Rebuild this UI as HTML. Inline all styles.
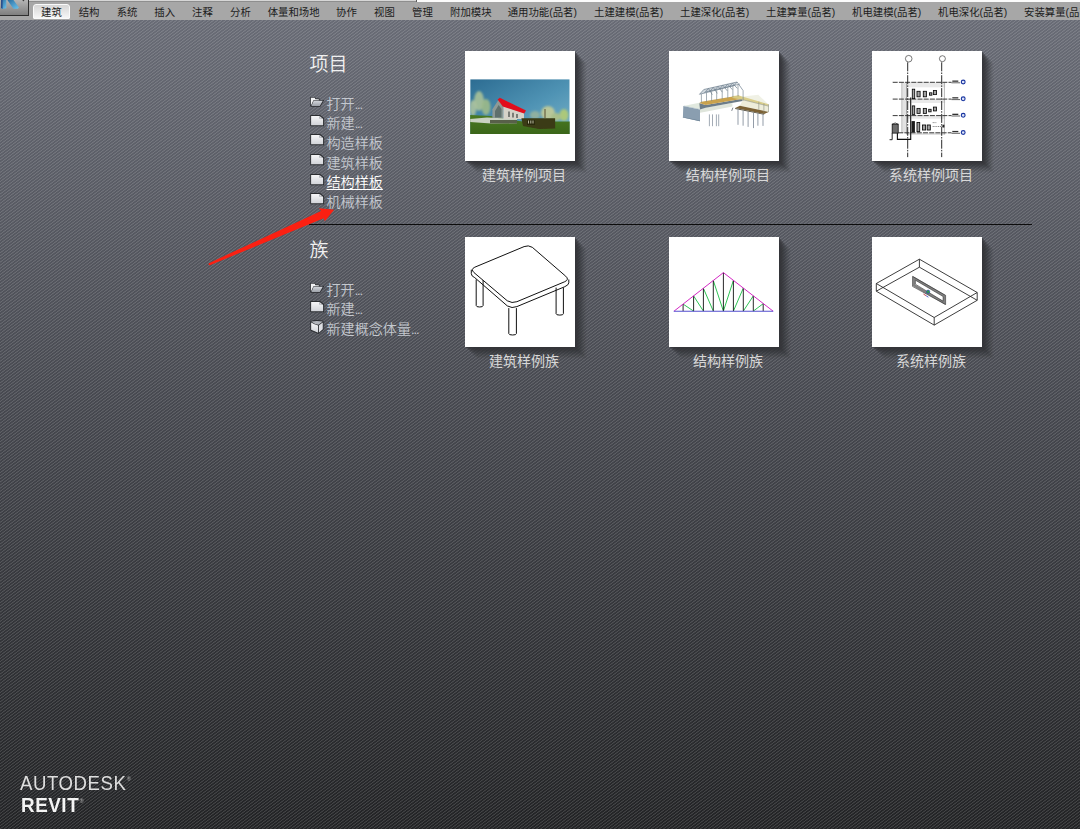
<!DOCTYPE html>
<html lang="zh-CN">
<head>
<meta charset="utf-8">
<title>Autodesk Revit</title>
<style>
html,body{margin:0;padding:0;}
body{width:1080px;height:829px;overflow:hidden;position:relative;
  font-family:"Liberation Sans","Noto Sans CJK SC",sans-serif;
  background:#4a4c52;}
#bg{position:absolute;left:0;top:0;width:1080px;height:829px;
  background:linear-gradient(to bottom,#686b75 20px,#45474e 415px,#222325 829px);}
#stripes{position:absolute;left:0;top:0;width:1080px;height:829px;
  background:repeating-linear-gradient(142.9deg,rgba(255,255,255,0) 0px,rgba(255,255,255,0) 1.0px,rgba(255,255,255,.15) 1.5px,rgba(255,255,255,.15) 1.9px,rgba(255,255,255,0) 2.4px,rgba(255,255,255,0) 2.47px);}
/* ribbon */
#ribbon{position:absolute;left:0;top:0;width:1080px;height:20px;background:#a7a7a7;}
#ribbon .topL{position:absolute;left:29px;width:387px;top:0;height:2px;background:linear-gradient(to bottom,#d6d6d6 0,#d6d6d6 1.2px,#8e8e8e 1.3px,#8e8e8e 2px);}
#ribbon .topD{position:absolute;left:416px;width:1px;top:0;height:2px;background:#5a5a5a;}
#ribbon .topR{position:absolute;left:417px;right:0;top:0;height:2px;background:linear-gradient(to bottom,#fbfbfb 0,#fbfbfb 1.5px,#c4c4c4 2px);}
#appbtn{position:absolute;left:0;top:0px;width:28px;height:15px;
  background:linear-gradient(to bottom,#b4b4b4,#7f7f7f);
  border-right:1px solid #2e2e2e;border-bottom:1px solid #2e2e2e;overflow:hidden;}
#appbtn svg{position:absolute;left:0;top:0;}
.tab{position:absolute;top:4.8px;height:16px;line-height:16px;font-size:10.4px;color:#1c1c1c;white-space:nowrap;}
.tab.on{top:4px;height:15px;left:33px;width:37px;box-sizing:border-box;border:1px solid #fafafa;border-radius:3px 3px 1px 1px;
  background:linear-gradient(to bottom,#d6d6d6,#f6f6f6);}
.tab.on span{position:absolute;left:7px;top:-0.2px;line-height:15px;}
/* start page */
.h{position:absolute;left:309.5px;font-size:19px;color:#f0f0f0;line-height:22px;white-space:nowrap;font-weight:350;}
.it{position:absolute;left:326.5px;font-size:14.1px;color:#c4c8cf;line-height:18px;white-space:nowrap;font-weight:350;}
.it.sel{color:#ffffff;text-decoration:underline;text-underline-offset:2px;}
.ic{position:absolute;left:310px;width:15px;height:12px;overflow:visible;}
.dots{letter-spacing:-1.2px;font-size:13px;}
#divider{position:absolute;left:309px;top:224px;width:723px;height:1px;background:#0c0c0c;}
.th{position:absolute;width:110px;height:110px;background:#fff;
  box-shadow:1px 1px 0 rgba(50,51,55,0.500),2px 2px 0 rgba(50,51,55,0.375),3px 3px 0 rgba(50,51,55,0.333),4px 4px 0 rgba(50,51,55,0.273),5px 5px 0 rgba(50,51,55,0.233),6px 6px 0 rgba(50,51,55,0.189),7px 7px 0 rgba(50,51,55,0.159),8px 8px 0 rgba(50,51,55,0.137),9px 9px 0 rgba(50,51,55,0.110),10px 10px 0 rgba(50,51,55,0.089),11px 11px 0 rgba(50,51,55,0.062),12px 12px 0 rgba(50,51,55,0.040);}
.th svg{position:absolute;left:0;top:0;}
.lb{position:absolute;width:160px;text-align:center;font-size:14.05px;color:#d8d8d8;line-height:18px;white-space:nowrap;font-weight:400;}
#arrow{position:absolute;left:0;top:0;}
#logo1{position:absolute;left:20px;top:771.7px;font-size:20px;line-height:22px;color:#dedede;letter-spacing:0.6px;white-space:nowrap;transform:scaleX(0.93);transform-origin:0 0;}
#logo2{position:absolute;left:20.8px;top:793.5px;font-size:20px;line-height:22px;color:#f4f4f4;font-weight:bold;letter-spacing:0.6px;white-space:nowrap;transform:scaleX(0.94);transform-origin:0 0;}
.reg{font-size:5.5px;vertical-align:top;position:relative;top:-4px;left:0.5px;letter-spacing:0;font-weight:normal;color:#bdbdbd;}
</style>
</head>
<body>
<div id="bg"></div>
<div id="stripes"></div>

<!-- ribbon -->
<div id="ribbon">
  <div class="topL"></div><div class="topD"></div><div class="topR"></div>
  <div id="appbtn">
    <svg width="28" height="15" viewBox="0 0 28 15">
      <defs>
        <linearGradient id="rb" x1="0" y1="0" x2="1" y2="1">
          <stop offset="0" stop-color="#2a6da0"/><stop offset="1" stop-color="#6cc4ee"/>
        </linearGradient>
      </defs>
      <path d="M1 0 L6.3 0 L6.3 8.2 L2.2 9 L1 8 Z" fill="url(#rb)"/>
      <path d="M1 0 L2.6 0 L2.6 8.8 L1 8 Z" fill="#2a4f8c"/>
      <path d="M7.4 0 L13.5 0 L18.9 7.6 L17.8 8.8 L13.4 8.8 Z" fill="url(#rb)"/>
      <path d="M22.3 0 L24.5 0 L23.4 1.6 Z" fill="#3a3a3a"/>
    </svg>
  </div>
  <div class="tab on"><span>建筑</span></div>
  <div class="tab" style="left:78.7px">结构</div>
  <div class="tab" style="left:116.7px">系统</div>
  <div class="tab" style="left:154.3px">插入</div>
  <div class="tab" style="left:192px">注释</div>
  <div class="tab" style="left:230px">分析</div>
  <div class="tab" style="left:267.7px">体量和场地</div>
  <div class="tab" style="left:336px">协作</div>
  <div class="tab" style="left:374px">视图</div>
  <div class="tab" style="left:412px">管理</div>
  <div class="tab" style="left:450px">附加模块</div>
  <div class="tab" style="left:507.7px">通用功能(品茗)</div>
  <div class="tab" style="left:594px">土建建模(品茗)</div>
  <div class="tab" style="left:680px">土建深化(品茗)</div>
  <div class="tab" style="left:766px">土建算量(品茗)</div>
  <div class="tab" style="left:852px">机电建模(品茗)</div>
  <div class="tab" style="left:938px">机电深化(品茗)</div>
  <div class="tab" style="left:1024px">安装算量(品茗)</div>
</div>


<svg width="0" height="0" style="position:absolute">
  <defs>
    <linearGradient id="gFile" x1="0" y1="0" x2="0" y2="1">
      <stop offset="0" stop-color="#f6f6f8"/><stop offset="1" stop-color="#d2d4d9"/>
    </linearGradient>
    <linearGradient id="gFlap" x1="0" y1="0" x2="0" y2="1">
      <stop offset="0" stop-color="#d2d5db"/><stop offset="1" stop-color="#9ea2aa"/>
    </linearGradient>
    <symbol id="icFile" viewBox="0 0 15 12">
      <path d="M0.3 0.1 H10.2 L14.1 3.3 V11.3 H0.3 Z" fill="#2b2d31"/>
      <path d="M1.1 0.9 H9.5 L13.1 3.9 V10.2 H1.1 Z" fill="url(#gFile)"/>
      <path d="M9.3 0.9 L13.1 4.1 H10.3 Q9.3 4.1 9.3 3.1 Z" fill="#9da0a7"/>
      <path d="M10 2.1 L12 3.6 H10.8 Q10 3.6 10 2.9 Z" fill="#f4f4f6"/>
    </symbol>
    <symbol id="icFolder" viewBox="0 0 15 11">
      <path d="M0.2 0.2 H5.2 L5.9 1.6 H9.6 V3 H14.2 L10.4 10.2 H0.9 L0.2 9 Z" fill="#2b2d31"/>
      <path d="M0.9 0.9 H4.7 L5.4 2.3 H8.8 V3.4 H3.4 L1.2 8.3 L0.9 8 Z" fill="#f2f3f5"/>
      <path d="M3.7 4 H12.8 L9.8 9.3 H1.4 Z" fill="url(#gFlap)"/>
    </symbol>
    <symbol id="icCube" viewBox="0 0 15 14">
      <path d="M0.3 1 Q7 -0.9 14 1 V9.7 L9 13.9 L0.3 10.5 Z" fill="#2b2d31"/>
      <path d="M1.2 1.6 Q7 0.2 13.2 1.6 L8.8 4.8 Q4 4.1 1.2 1.6 Z" fill="#b2b5bc"/>
      <path d="M1.2 2.5 Q4.5 4.7 8.4 5.5 V12.7 L1.2 9.8 Z" fill="url(#gFile)"/>
      <path d="M9.3 5.3 L13.2 2.4 V9.2 L9.3 12.6 Z" fill="#dddee3"/>
    </symbol>
  </defs>
</svg>

<!-- projects -->
<div class="h" style="top:54px">项目</div>
<div class="it" style="top:94.5px">打开<span class="dots">...</span></div>
<div class="it" style="top:114.2px">新建<span class="dots">...</span></div>
<div class="it" style="top:133.9px">构造样板</div>
<div class="it" style="top:153.6px">建筑样板</div>
<div class="it sel" style="top:173.3px">结构样板</div>
<div class="it" style="top:193.0px">机械样板</div>


<svg class="ic" style="top:96.8px;height:10.6px" viewBox="0 0 15 11" preserveAspectRatio="none"><use href="#icFolder"/></svg>
<svg class="ic" style="top:114.6px" viewBox="0 0 15 12" preserveAspectRatio="none"><use href="#icFile"/></svg>
<svg class="ic" style="top:134.3px" viewBox="0 0 15 12" preserveAspectRatio="none"><use href="#icFile"/></svg>
<svg class="ic" style="top:154.0px" viewBox="0 0 15 12" preserveAspectRatio="none"><use href="#icFile"/></svg>
<svg class="ic" style="top:173.7px" viewBox="0 0 15 12" preserveAspectRatio="none"><use href="#icFile"/></svg>
<svg class="ic" style="top:193.4px" viewBox="0 0 15 12" preserveAspectRatio="none"><use href="#icFile"/></svg>
<svg class="ic" style="top:282.8px;height:10.6px" viewBox="0 0 15 11" preserveAspectRatio="none"><use href="#icFolder"/></svg>
<svg class="ic" style="top:300.7px" viewBox="0 0 15 12" preserveAspectRatio="none"><use href="#icFile"/></svg>
<svg class="ic" style="top:320px;height:14px;width:14.5px" viewBox="0 0 15 14" preserveAspectRatio="none"><use href="#icCube"/></svg>

<div id="divider"></div>

<!-- families -->
<div class="h" style="top:240px">族</div>
<div class="it" style="top:280.5px">打开<span class="dots">...</span></div>
<div class="it" style="top:300.2px">新建<span class="dots">...</span></div>
<div class="it" style="top:319.9px">新建概念体量<span class="dots">...</span></div>

<!-- thumbnails -->
<div class="th" id="t1" style="left:465px;top:51px"><svg width="110" height="110" viewBox="0 0 110 110">
  <defs>
    <linearGradient id="sky" x1="0" y1="0" x2="1" y2="1">
      <stop offset="0" stop-color="#2c6c92"/><stop offset="0.55" stop-color="#4f93b4"/><stop offset="1" stop-color="#79b3c9"/>
    </linearGradient>
    <linearGradient id="grass" x1="0" y1="0" x2="0" y2="1">
      <stop offset="0" stop-color="#4a7a22"/><stop offset="1" stop-color="#3a6519"/>
    </linearGradient>
    <filter id="b1" x="-20%" y="-20%" width="140%" height="140%"><feGaussianBlur stdDeviation="0.9"/></filter>
    <filter id="b05" x="-20%" y="-20%" width="140%" height="140%"><feGaussianBlur stdDeviation="0.35"/></filter>
    <clipPath id="c1"><rect x="5.2" y="28.2" width="99.5" height="54.9"/></clipPath>
  </defs>
  <g clip-path="url(#c1)">
    <rect x="5.2" y="28.2" width="99.5" height="55" fill="url(#sky)"/>
    <g filter="url(#b1)">
      <ellipse cx="14" cy="50" rx="5" ry="10" fill="#a9c198" opacity="0.9"/>
      <ellipse cx="21" cy="56" rx="4.5" ry="8" fill="#9dba8a" opacity="0.9"/>
      <ellipse cx="8" cy="57" rx="3.5" ry="8" fill="#b0c6a0" opacity="0.85"/>
      <ellipse cx="83" cy="62" rx="7" ry="7" fill="#b9c79a"/>
      <ellipse cx="99" cy="64" rx="4.5" ry="6" fill="#b4cc74" opacity="0.9"/>
      <ellipse cx="91" cy="66" rx="5" ry="4" fill="#a9bf8a"/>
      <ellipse cx="70" cy="64" rx="5" ry="4" fill="#8fb0a0"/>
    </g>
    <path d="M5 64 L26 65 L40 68 L58 70.5 L105 70.5 V84 H5 Z" fill="url(#grass)"/>
    <g filter="url(#b05)">
      <path d="M5 68 L22 66.5 L52 68 L52 72.3 L26 72.6 L5 71 Z" fill="#c9d2c2"/>
      <path d="M25 69 H52 V72.4 H25 Z" fill="#59604a"/>
      <path d="M27.4 58.3 L33.7 48.6 L38.4 55.2 V67 H27.4 Z" fill="#8e9a96"/>
      <path d="M30 60 L33.7 54 L36.5 58 V66.5 H30 Z" fill="#5f706c"/>
      <path d="M38.4 55 L59 62 V68 H38.4 Z" fill="#d6d2c8"/>
      <path d="M44 60.5 V66 M48 61.8 V66.4 M52 63 V67" stroke="#4a4e4c" stroke-width="1.3"/>
      <path d="M32.6 48.6 L34.8 46.8 L61 59.6 L59.2 62.4 L37.8 55.4 Z" fill="#e2101e"/>
      <path d="M56.4 67.2 H90.1 V77.6 L74 78 L58 75 Z" fill="#3b3a14"/>
      <path d="M62 69 H70 V74 H62 Z" fill="#2a2a10"/>
      <path d="M63.5 69.5 V72.5 M65.8 69.5 V72.5 M68 69.5 V72.5" stroke="#c8c8b0" stroke-width="0.9"/>
      <path d="M80 58 V67" stroke="#5a5030" stroke-width="1"/>
    </g>
  </g>
</svg></div>
<div class="th" id="t2" style="left:669px;top:51px"><svg width="110" height="110" viewBox="0 0 110 110"><g filter="url(#b05)"><polygon points="14.3,55.1 30.3,51.8 36.6,53.9 31.0,58.4" fill="#e1e9df"/>
<polygon points="74.1,45.6 89.3,43.7 99.5,53.6 74.1,47.9" fill="#eef0e2" opacity="0.9"/>
<polygon points="14.3,55.1 31.0,58.5 31.0,70.3 13.9,66.6" fill="#8a9eb0"/>
<polygon points="14.3,55.1 15.3,54.7 31.9,58.2 31.0,58.5" fill="#b4c3ce"/>
<polygon points="13.9,65.9 31.0,69.6 31.0,70.3 13.9,66.6" fill="#6f8496"/>
<polygon points="31.0,58.3 36.6,56.5 63.4,52.1 63.4,55.5 36.6,60.7 31.0,61.8" fill="#dfe5db"/>
<polygon points="30.3,52.3 36.6,54.0 73.6,47.8 73.6,49.9 36.6,56.8 31.0,58.6" fill="#6d7d89"/>
<polygon points="30.3,52.1 32.4,50.7 69.9,44.6 73.6,47.7 36.6,54.0" fill="#c9a24e"/>
<polygon points="63.4,44.9 69.9,44.6 99.5,53.3 99.5,55.1 74.1,48.8 63.4,47.0" fill="#d9cc86" opacity="0.95"/>
<polygon points="74.1,48.8 99.5,55.1 99.5,60.9 70.8,54.8" fill="#ecebd6" opacity="0.9"/>
<polygon points="66.2,57.1 70.8,54.8 99.7,60.9 95.1,63.0" fill="#7c6236"/>
<polygon points="66.2,57.1 95.1,63.0 95.1,63.8 66.2,57.9" fill="#55503f"/>
<polygon points="30.5,43.3 34.8,38.5 68.1,31.0 65.3,34.5" fill="#a3b2bd" opacity="0.5"/>
<path d="M34.8 38.5 L68.1 31.0 M30.5 43.3 L65.3 34.5 M30.5 43.3 L34.8 38.5 M65.3 34.5 L68.1 31.0 M68.1 31.0 L74.1 39.6 M36.6 40.9 L70.8 33.1 M35.4 42.0 L39.5 37.5 M39.5 37.5 L43.3 43.7 M40.4 40.8 L44.3 36.4 M44.3 36.4 L48.3 42.4 M45.4 39.5 L49.1 35.3 M49.1 35.3 L53.3 41.2 M50.4 38.2 L53.9 34.2 M53.9 34.2 L58.3 39.9 M55.4 37.0 L58.7 33.2 M58.7 33.2 L63.3 38.6 M60.4 35.7 L63.5 32.1 M63.5 32.1 L68.3 37.4" stroke="#6e808e" stroke-width="0.7" fill="none"/>
<path d="M32.4 43.1 L32.4 51.4 M37.5 41.8 L37.5 50.7 M42.6 40.5 L42.6 49.8 M47.7 39.2 L47.7 49.0 M53.2 37.7 L53.2 48.1 M58.8 36.3 L58.8 47.1 M63.9 34.9 L63.9 46.3 M69.0 34.0 L69.0 45.3 M74.1 39.6 L74.1 49.6" stroke="#74828d" stroke-width="0.65" fill="none"/>
<path d="M89.8 50.7 L89.8 58.8 M94.9 52.5 L94.9 61.8 M99.5 53.3 L99.5 61.0 M74.1 48.8 L99.5 55.1" stroke="#8c8f7c" stroke-width="0.6" fill="none"/>
<path d="M40.4 63.4 L40.4 75.2 M43.5 63.4 L43.5 75.2 M47.4 63.4 L47.4 75.2 M49.7 63.4 L49.7 75.2" stroke="#929ca8" stroke-width="0.85" fill="none"/>
<path d="M69.0 58.3 L69.0 73.8 M74.1 59.5 L74.1 74.7 M79.1 60.7 L79.1 75.9 M84.5 61.8 L84.5 77.1 M88.9 62.2 L88.9 74.7 M94.0 62.9 L94.0 74.9" stroke="#8d97a3" stroke-width="0.95" fill="none"/>
<path d="M63.9 56.7 L62.7 59.9" stroke="#707880" stroke-width="0.9" fill="none"/></g></svg></div>
<div class="th" id="t3" style="left:872px;top:51px"><svg width="110" height="110" viewBox="0 0 110 110"><g filter="url(#b05)"><rect x="29.8" y="31.3" width="5.0" height="50.8" fill="#e3e3e3" />
<rect x="34.8" y="31.3" width="38.4" height="5.0" fill="#e9e9e9" />
<rect x="34.8" y="48.1" width="38.4" height="3.9" fill="#e9e9e9" />
<rect x="34.8" y="64.6" width="38.4" height="3.1" fill="#e9e9e9" />
<rect x="34.8" y="81.8" width="38.4" height="2.2" fill="#e0e0e0" />
<path d="M29.8 31.3 L29.8 82.1" stroke="#9a9a9a" stroke-width="0.6" fill="none" />
<path d="M34.5 31.3 L34.5 83.4" stroke="#8a8a8a" stroke-width="0.7" fill="none" />
<path d="M72.4 31.3 L72.4 83.4" stroke="#9a9a9a" stroke-width="0.7" fill="none" />
<path d="M20.7 31.3 L79.5 31.3" stroke="#3a3a3a" stroke-width="1" fill="none" stroke-dasharray="5 1.2"/>
<path d="M79.5 31.8 L88.1 31.8" stroke="#222" stroke-width="0.7" fill="none" />
<circle cx="91.2" cy="31.0" r="1.9" fill="#dfe6fa" stroke="#17339f" stroke-width="1.1"/>
<rect x="80.3" y="29.5" width="6.0" height="1.3" fill="#333" />
<path d="M20.7 48.1 L79.5 48.1" stroke="#3a3a3a" stroke-width="1" fill="none" stroke-dasharray="5 1.2"/>
<path d="M79.5 48.6 L88.1 48.6" stroke="#222" stroke-width="0.7" fill="none" />
<circle cx="91.2" cy="47.8" r="1.9" fill="#dfe6fa" stroke="#17339f" stroke-width="1.1"/>
<rect x="80.3" y="46.2" width="6.0" height="1.3" fill="#333" />
<path d="M20.7 64.6 L79.5 64.6" stroke="#3a3a3a" stroke-width="1" fill="none" stroke-dasharray="5 1.2"/>
<path d="M79.5 65.0 L88.1 65.0" stroke="#222" stroke-width="0.7" fill="none" />
<circle cx="91.2" cy="64.3" r="1.9" fill="#dfe6fa" stroke="#17339f" stroke-width="1.1"/>
<rect x="80.3" y="62.7" width="6.0" height="1.3" fill="#333" />
<path d="M26.2 81.8 L79.5 81.8" stroke="#3a3a3a" stroke-width="1" fill="none" stroke-dasharray="5 1.2"/>
<path d="M79.5 82.3 L88.1 82.3" stroke="#222" stroke-width="0.7" fill="none" />
<circle cx="91.2" cy="81.5" r="1.9" fill="#dfe6fa" stroke="#17339f" stroke-width="1.1"/>
<rect x="80.3" y="79.9" width="6.0" height="1.3" fill="#333" />
<path d="M35.7 11.3 L35.7 106.1" stroke="#2a2a2a" stroke-width="1" fill="none" stroke-dasharray="9 1.2 1.5 1.2"/>
<path d="M69.7 11.3 L69.7 106.1" stroke="#2a2a2a" stroke-width="1" fill="none" stroke-dasharray="9 1.2 1.5 1.2"/>
<circle cx="36.7" cy="7.7" r="3.3" fill="#fff" stroke="#222" stroke-width="0.6"/>
<circle cx="70.4" cy="7.7" r="3.0" fill="#fff" stroke="#222" stroke-width="0.6"/>
<rect x="40.3" y="38.2" width="2.4" height="9.4" fill="#a2a2a2" stroke="#0a0a0a" stroke-width="0.85"/>
<rect x="45.0" y="40.3" width="3.1" height="5.5" fill="#a2a2a2" stroke="#0a0a0a" stroke-width="0.85"/>
<rect x="51.3" y="40.3" width="3.1" height="5.5" fill="#a2a2a2" stroke="#0a0a0a" stroke-width="0.85"/>
<rect x="57.5" y="41.8" width="2.4" height="2.4" fill="#a2a2a2" stroke="#0a0a0a" stroke-width="0.85"/>
<rect x="61.4" y="39.5" width="3.1" height="4.1" fill="#a2a2a2" stroke="#0a0a0a" stroke-width="0.85"/>
<rect x="40.3" y="54.9" width="2.4" height="8.5" fill="#a2a2a2" stroke="#0a0a0a" stroke-width="0.85"/>
<rect x="45.0" y="57.4" width="3.1" height="5.0" fill="#a2a2a2" stroke="#0a0a0a" stroke-width="0.85"/>
<rect x="51.3" y="57.4" width="3.1" height="5.0" fill="#a2a2a2" stroke="#0a0a0a" stroke-width="0.85"/>
<rect x="56.7" y="58.3" width="2.4" height="2.5" fill="#a2a2a2" stroke="#0a0a0a" stroke-width="0.85"/>
<rect x="61.4" y="56.1" width="3.1" height="3.8" fill="#a2a2a2" stroke="#0a0a0a" stroke-width="0.85"/>
<rect x="45.0" y="71.5" width="2.7" height="9.1" fill="#a2a2a2" stroke="#0a0a0a" stroke-width="0.85"/>
<rect x="50.5" y="74.0" width="3.1" height="5.0" fill="#a2a2a2" stroke="#0a0a0a" stroke-width="0.85"/>
<rect x="55.2" y="74.0" width="3.1" height="5.0" fill="#a2a2a2" stroke="#0a0a0a" stroke-width="0.85"/>
<rect x="39.5" y="70.1" width="3.4" height="11.4" fill="#1a1a1a" />
<path d="M60.7 71.6 L64.6 71.6" stroke="#222" stroke-width="0.6" fill="none" stroke-dasharray="1 0.8"/>
<path d="M60.7 75.5 L71.6 75.5" stroke="#222" stroke-width="0.6" fill="none" stroke-dasharray="1 0.8"/>
<rect x="70.5" y="73.7" width="1.9" height="2.8" fill="#222" />
<path d="M38.7 46.6 V88.4 H25.4 V82.1" stroke="#111" stroke-width="1.1" fill="none"/>
<rect x="20.2" y="73.2" width="6.0" height="8.9" fill="#6e6e6e" stroke="#111" stroke-width="0.8"/>
<path d="M20.2 82.1 V88.7 H17.6" stroke="#111" stroke-width="0.9" fill="none"/>
<path d="M20.2 73.2 Q23.2 70.8 26.2 73.2" stroke="#111" stroke-width="0.7" fill="none"/></g></svg></div>
<div class="th" id="t4" style="left:465px;top:237px"><svg width="110" height="110" viewBox="0 0 110 110"><path d="M91.1 50.6 V76.7 Q91.1 78.1 94.8 78.1 Q98.4 78.1 98.4 76.7 V50.6" fill="#fff" stroke="#111" stroke-width="1"/>
<path d="M11.2 42.5 V68.5 Q11.2 70.0 14.6 70.0 Q18.1 70.0 18.1 68.5 V42.5" fill="#fff" stroke="#111" stroke-width="1"/>
<path d="M9.8 30.2 Q5.4 32.2 9.0 35.6 L42.3 63.8 Q47.0 66.7 51.9 64.7 L99.8 44.7 Q104.5 42.5 100.7 39.2 L67.3 10.3 Q63.3 7.8 59.1 9.6 Z" fill="#fff" stroke="#111" stroke-width="1"/>
<path d="M6.3 32.7 V36.7 Q6.3 39.2 9.8 40.7 L42.3 68.9 Q47.0 71.8 51.9 69.6 L99.8 49.7 Q103.8 47.9 103.8 45.8 V42.5" fill="none" stroke="#111" stroke-width="1"/>
<path d="M43.8 71.1 V96.6 Q43.8 98.0 47.6 98.0 Q51.4 98.0 51.4 96.6 V71.1" fill="#fff" stroke="#111" stroke-width="1"/></svg></div>
<div class="th" id="t5" style="left:669px;top:237px"><svg width="110" height="110" viewBox="0 0 110 110"><path d="M14.1 67.1 L24.6 74.1 M94.2 66.7 L84.3 74.1 M24.6 58.9 L34.4 74.1 M84.3 58.9 L74.3 74.1 M34.4 51.3 L44.3 74.1 M74.3 51.1 L64.4 74.1 M44.3 43.5 L54.4 74.1 M64.4 43.4 L54.4 74.1" stroke="#2fc455" stroke-width="1" fill="none"/>
<path d="M14.1 67.1 L14.1 74.1 M24.6 58.9 L24.6 74.1 M34.4 51.3 L34.4 74.1 M44.3 43.5 L44.3 74.1 M54.4 35.6 L54.4 74.1 M64.4 43.4 L64.4 74.1 M74.3 51.1 L74.3 74.1 M84.3 58.9 L84.3 74.1 M94.2 66.7 L94.2 74.1" stroke="#111" stroke-width="0.9" fill="none"/>
<path d="M5.1 74.1 L54.4 35.6 L104.0 74.1" stroke="#d428c4" stroke-width="1" fill="none"/>
<path d="M4.7 74.3 L104.3 74.3" stroke="#544fd0" stroke-width="1.1" fill="none"/></svg></div>
<div class="th" id="t6" style="left:872px;top:237px"><svg width="110" height="110" viewBox="0 0 110 110"><path d="M4.3 46.5 L47.4 22.2 L105.2 55.5 L62.2 80.5 Z M4.3 54.2 L47.4 30.2 L105.2 63.3 L62.2 88.1 Z M4.3 46.5 L4.3 54.2 M47.4 22.2 L47.4 30.2 M105.2 55.5 L105.2 63.3 M62.2 80.5 L62.2 88.1" stroke="#1c1c1c" stroke-width="0.85" fill="none"/>
<path d="M42.0 41.0 L72.3 58.8 L72.3 66.0 L42.0 48.3 Z" stroke="#808080" stroke-width="2.4" fill="none"/>
<path d="M40.5 39.4 L73.6 58.4 L73.6 67.5 L40.5 49.4 Z" stroke="#2a2a2a" stroke-width="0.6" fill="none"/><path d="M43.4 43.2 L71.1 59.5 L71.1 64.2 L43.4 47.2 Z" stroke="#2a2a2a" stroke-width="0.6" fill="none"/>
<circle cx="56.1" cy="54.8" r="1.7" fill="#2f9a4a" stroke="#2a3fb8" stroke-width="0.6"/>
<path d="M51.4 57.0 L54.2 58.8" stroke="#c02030" stroke-width="0.8"/>
<path d="M54.2 58.8 L56.4 60.2" stroke="#3040c0" stroke-width="0.8"/></svg></div>

<div class="lb" style="left:444px;top:166px">建筑样例项目</div>
<div class="lb" style="left:648px;top:166px">结构样例项目</div>
<div class="lb" style="left:851px;top:166px">系统样例项目</div>
<div class="lb" style="left:444px;top:352px">建筑样例族</div>
<div class="lb" style="left:648px;top:352px">结构样例族</div>
<div class="lb" style="left:851px;top:352px">系统样例族</div>

<svg id="arrow" width="1080" height="829" viewBox="0 0 1080 829">
  <polygon points="208.6,263.4 209.4,262.9 321.1,210.9 318.9,208.3 334.1,209.8 324.8,221.3 323.7,218.3 209.9,265.2 208.8,265.0" fill="#fb2012"/>
</svg>

<div id="logo1">AUTODESK<span class="reg">®</span></div>
<div id="logo2">REVIT<span class="reg">®</span></div>
</body>
</html>
